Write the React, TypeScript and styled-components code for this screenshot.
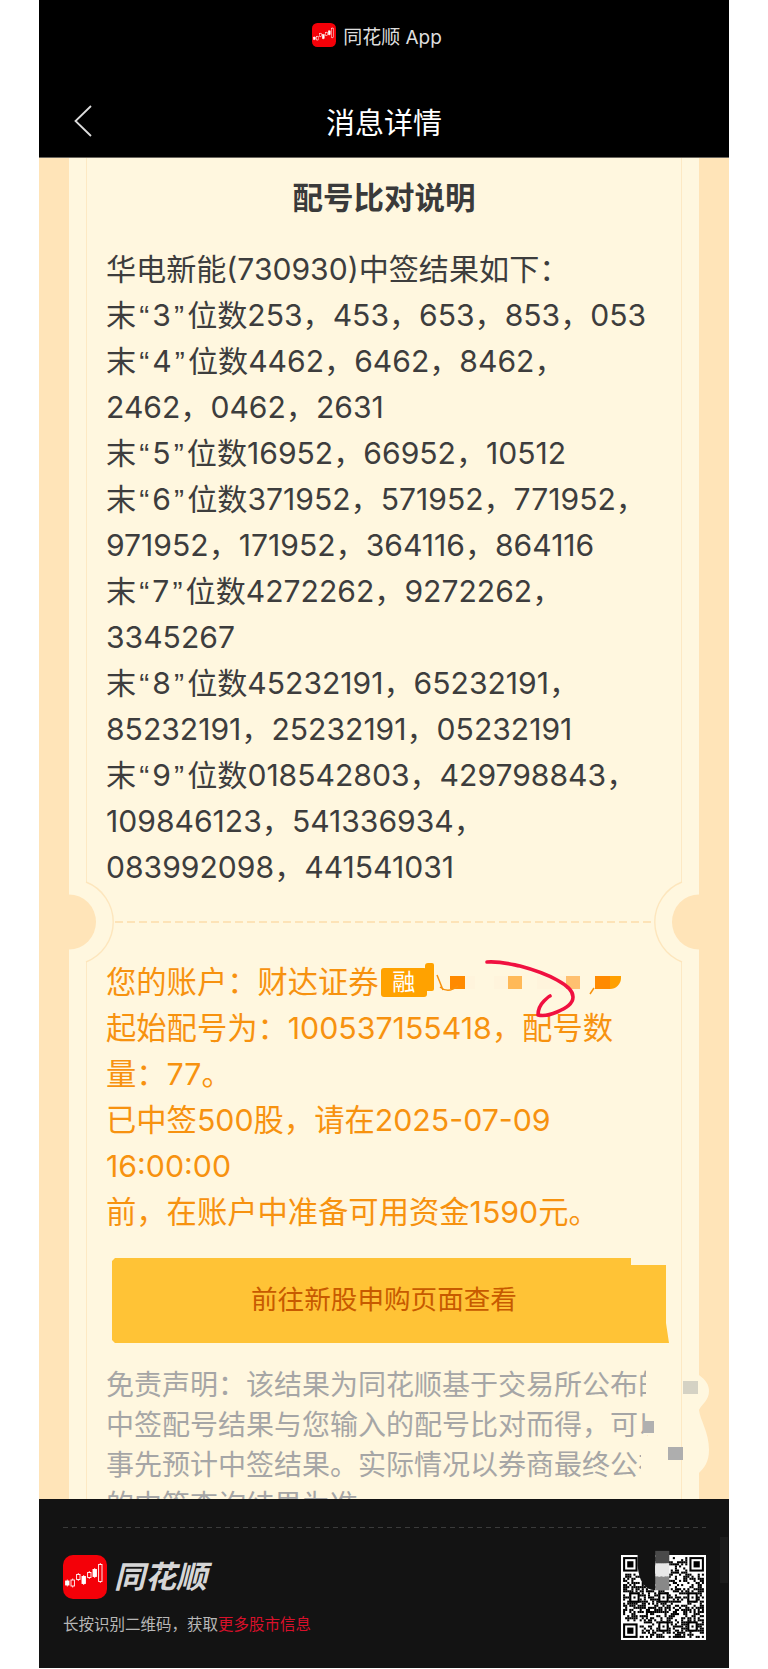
import * as React from "react"
import styled, { createGlobalStyle } from "styled-components"

const GlobalStyle = createGlobalStyle`
  html, body {
    margin: 0;
    padding: 0;
    background: #fff;
    font-family: Inter, "Noto Sans CJK SC", sans-serif;
  }
`

const resultLines = [
    '华电新能(730930)中签结果如下：',
    '末“3”位数253，453，653，853，053',
    '末“4”位数4462，6462，8462，',
    '2462，0462，2631',
    '末“5”位数16952，66952，10512',
    '末“6”位数371952，571952，771952，',
    '971952，171952，364116，864116',
    '末“7”位数4272262，9272262，',
    '3345267',
    '末“8”位数45232191，65232191，',
    '85232191，25232191，05232191',
    '末“9”位数018542803，429798843，',
    '109846123，541336934，',
    '083992098，441541031',
]

const accountLines = [
    '起始配号为：100537155418，配号数',
    '量：77。',
    '已中签500股，请在2025-07-09',
    '16:00:00',
    '前，在账户中准备可用资金1590元。',
]

const disclaimerLines = [
    { text: '免责声明：该结果为同花顺基于交易所公布的', width: 540 },
    { text: '中签配号结果与您输入的配号比对而得，可以', width: 542 },
    { text: '事先预计中签结果。实际情况以券商最终公布', width: 535 },
    { text: '的中签查询结果为准', width: 540 },
]

const maskPieces = [
    { width: 15, color: '#ff8a00' },
    { width: 10, color: '#fff4dc' },
    { width: 19, color: 'transparent' },
    { width: 14, color: '#fff4dc' },
    { width: 14, color: '#ffb958' },
    { width: 15, color: 'transparent' },
    { width: 29, color: '#fff4dc' },
    { width: 14, color: '#ffc070' },
    { width: 15, color: 'transparent' },
    { width: 15, color: '#ff8a00' },
    { width: 11, color: '#ffa000', round: true },
]

const Phone = styled.div`
  width: 690px;
  height: 1668px;
  margin-left: 39px;
  display: flex;
  flex-direction: column;
  overflow: hidden;
`

const Header = styled.header`
  height: 158px;
  flex: none;
  box-sizing: border-box;
  background: #000;
  border-bottom: 1px solid #6a665e;
`

const AppRow = styled.div`
  height: 70px;
  box-sizing: border-box;
  padding-right: 14px;
  display: flex;
  align-items: center;
  justify-content: center;
  gap: 7px;
  color: #dedede;
  font-size: 19px;
`

const NavBar = styled.div`
  display: grid;
  grid-template-columns: 1fr auto 1fr;
  align-items: center;
  height: 58px;
  margin-top: 22px;
  padding-left: 35px;
  padding-right: 35px;
  color: #fff;
  font-size: 29px;
`

const Body = styled.main`
  position: relative;
  flex: 1;
  min-height: 0;
  overflow: hidden;
  padding: 0 30px;
  background: #ffe4b8;
`

const Ticket = styled.section`
  position: relative;
  height: 100%;
  padding: 0 17px;
  background: #fff7df;
`

const Inner = styled.div`
  height: 100%;
  box-sizing: border-box;
  padding: 17px 14px 0 19px;
  border-left: 1px solid #fde9c4;
  border-right: 1px solid #fde9c4;
`

const Title = styled.h1`
  margin: 0 0 25px;
  padding-right: 5px;
  text-align: center;
  font-size: 30.5px;
  line-height: 46px;
  font-weight: 700;
  color: #3a3a3a;
`

const Line = styled.div<{ $color: string; $size: number }>`
  height: 46px;
  font-size: ${props => props.$size}px;
  line-height: 46px;
  white-space: nowrap;
  color: ${props => props.$color};
`

const Quote = styled.span`
  margin: 0 3.1px;
  font-family: "Liberation Sans", sans-serif;
  line-height: 0;
`

const Divider = styled.div`
  height: 2px;
  margin: 31px 14px 36px 9px;
  background: repeating-linear-gradient(90deg, #fde3b7 0 8px, transparent 8px 12px);
`

const AccountBlock = styled.div`
  position: relative;
`

const AccountLine = styled(Line)`
  display: flex;
  align-items: center;
`

const Badge = styled.span`
  position: relative;
  width: 46px;
  height: 29px;
  margin-left: 2px;
  flex: none;
  display: flex;
  align-items: center;
  justify-content: center;
  border-radius: 3px;
  background: #ffa200;
  color: #fff;
  font-size: 23px;
  line-height: 29px;
  &::after {
    content: "";
    position: absolute;
    left: 44px;
    top: -5px;
    width: 9px;
    height: 28px;
    border-radius: 3px 2px 2px 0;
    background: #ffa200;
  }
`

const Mask = styled.span`
  display: flex;
  height: 13px;
  margin-left: 23px;
`

const MaskPiece = styled.span<{ $width: number; $color: string; $round?: boolean }>`
  width: ${props => props.$width}px;
  background: ${props => props.$color};
  border-bottom-right-radius: ${props => props.$round ? '11px' : '0'};
`

const Scribble = styled.svg`
  position: absolute;
  left: 264px;
  top: -9px;
  width: 270px;
  height: 70px;
`

const BuyButton = styled.div`
  width: 557px;
  height: 85px;
  box-sizing: border-box;
  margin: 23px 0 22px 6px;
  padding: 0 13px 6px 0;
  display: flex;
  align-items: center;
  justify-content: center;
  background: #ffc336;
  color: #c75a00;
  font-size: 26.6px;
  clip-path: polygon(3px 0, 519px 0, 519px 7px, 554px 7px, 554px 65px, 557px 85px, 3px 85px, 0 82px, 0 3px);
`

const Disclaimer = styled.div<{ $width: number }>`
  width: ${props => props.$width}px;
  overflow: hidden;
  white-space: nowrap;
  font-size: 28px;
  line-height: 40px;
  color: #a6a6a6;
`

const Notch = styled.svg<{ $right?: boolean }>`
  position: absolute;
  top: 722px;
  width: 60px;
  height: 84px;
  ${props => props.$right ? 'right: 0; transform: scaleX(-1);' : 'left: 0;'}
`

const EdgeBlob = styled.svg`
  position: absolute;
  left: 601px;
  top: 1212px;
  width: 72px;
  height: 110px;
`

const Footer = styled.footer`
  position: relative;
  height: 169px;
  flex: none;
  box-sizing: border-box;
  padding: 28px 23px 0 24px;
  background: #131313;
  &::after {
    content: "";
    position: absolute;
    right: 1px;
    top: 38px;
    width: 8px;
    height: 46px;
    background: #1c1c1c;
  }
`

const FooterRule = styled.div`
  height: 1px;
  background: repeating-linear-gradient(90deg, #3a3a3a 0 5px, transparent 5px 9px);
`

const FooterRow = styled.div`
  display: flex;
  justify-content: space-between;
  margin-top: 27px;
`

const BrandRow = styled.div`
  display: flex;
  align-items: center;
  gap: 7px;
  height: 44px;
`

const Wordmark = styled.span`
  font-size: 31px;
  line-height: 44px;
  font-weight: 700;
  font-style: italic;
  color: #d6d6d6;
`

const Caption = styled.div`
  margin-top: 16px;
  font-size: 15.5px;
  line-height: 20px;
  color: #b8b8b8;
  white-space: nowrap;
`

const Highlight = styled.span`
  color: #d8102a;
`

const QrCode = styled.svg`
  width: 85px;
  height: 85px;
  flex: none;
  overflow: visible;
  filter: blur(0.35px);
`

// candles of the logo, in its 44 x 44 box
const candles = [
    { x: 4.3, y: 28, h: 4, solid: true },
    { x: 9.7, y: 28, h: 6, solid: false },
    { x: 15.3, y: 22, h: 5, solid: false },
    { x: 20.7, y: 25, h: 7, solid: true },
    { x: 26.3, y: 20, h: 5, solid: false },
    { x: 31.7, y: 18, h: 7, solid: true },
    { x: 37.3, y: 18, h: 17, solid: false },
]

const LogoMark = ({ size }: { size: number }) => (
    <svg width={size} height={size} viewBox="0 0 44 44">
        <rect width="44" height="44" rx="10" fill="#f40008" />
        {candles.map(c => (
            <g key={c.x}>
                <line x1={c.x} x2={c.x} y1={c.y - c.h / 2 - 1.5} y2={c.y + c.h / 2 + 1.5} stroke="#fff" strokeWidth="0.8" />
                <rect
                    x={c.x - 1.7}
                    y={c.y - c.h / 2}
                    width="3.4"
                    height={c.h}
                    fill={c.solid ? '#fff' : '#f40008'}
                    stroke="#fff"
                    strokeWidth="0.9"
                />
            </g>
        ))}
    </svg>
)

const NotchShape = ({ right }: { right?: boolean }) => (
    <Notch $right={right} viewBox="0 0 60 84">
        <rect x="15" y="3" width="4" height="78" fill="#fff7df" />
        <path d="M0 14.5 A27 27.5 0 0 1 0 69.5 Z" fill="#ffe4b8" />
        <path d="M17 2 A43 43 0 0 1 17 82" fill="none" stroke="#fde6bd" strokeWidth="1.4" />
    </Notch>
)

const withQuotes = (line: string) =>
    line.split(/([“”])/).map((part, i) => (i % 2 === 1 ? <Quote key={i}>{part}</Quote> : part))

const QR_SIZE = 41

const qrModules = () => {
    let seed = 73921
    const cells: { x: number; y: number }[] = []
    const inFinder = (x: number, y: number) =>
        (x < 9 && y < 9) || (x > QR_SIZE - 10 && y < 9) || (x < 9 && y > QR_SIZE - 10)
    for (let y = 1; y < QR_SIZE - 1; y++) {
        for (let x = 1; x < QR_SIZE - 1; x++) {
            seed = (seed * 1103515245 + 12345) & 0x7fffffff
            if (!inFinder(x, y) && (seed >> 16) % 100 < 50) cells.push({ x, y })
        }
    }
    return cells
}

const QrFinder = ({ x, y, size }: { x: number; y: number; size: number }) => (
    <g>
        <rect x={x} y={y} width={size} height={size} fill="#000" />
        <rect x={x + 1} y={y + 1} width={size - 2} height={size - 2} fill="#fff" />
        <rect x={x + 2} y={y + 2} width={size - 4} height={size - 4} fill="#000" />
    </g>
)

const Qr = () => {
    const cells = React.useMemo(qrModules, [])
    return (
        <QrCode viewBox={`0 0 ${QR_SIZE} ${QR_SIZE}`}>
            <rect width={QR_SIZE} height={QR_SIZE} fill="#fff" />
            {cells.map(c => <rect key={`${c.x}-${c.y}`} x={c.x} y={c.y} width="1" height="1" fill="#000" />)}
            <QrFinder x={1} y={1} size={7} />
            <QrFinder x={33} y={1} size={7} />
            <QrFinder x={1} y={33} size={7} />
            {[[6, 20], [20, 20], [34, 20], [20, 34], [34, 34]].map(([x, y]) => (
                <g key={`${x}-${y}`}>
                    <rect x={x - 2} y={y - 2} width="5" height="5" fill="#000" />
                    <rect x={x - 1} y={y - 1} width="3" height="3" fill="#fff" />
                    <rect x={x} y={y} width="1" height="1" fill="#000" />
                </g>
            ))}
            <path d="M8 0 L8 5 Q9 17 16.5 17 L16.5 0 Z" fill="#131313" />
            <rect x="16.5" y="-2" width="6.8" height="6" fill="#4a4a4a" />
            <rect x="16.5" y="4" width="6.8" height="6.5" fill="#e8e8e8" />
            <rect x="16.5" y="10.5" width="6.8" height="6.5" fill="#888" />
        </QrCode>
    )
}

export default function App() {
    return (
        <>
            <GlobalStyle />
            <Phone>
                <Header>
                    <AppRow>
                        <LogoMark size={24} />
                        <span>同花顺 App</span>
                    </AppRow>
                    <NavBar>
                        <svg width="18" height="32" viewBox="0 0 18 32">
                            <path d="M17 1 L1.5 16 L17 31" fill="none" stroke="#ddd" strokeWidth="1.8" />
                        </svg>
                        <span>消息详情</span>
                    </NavBar>
                </Header>
                <Body>
                    <Ticket>
                        <Inner>
                            <Title>配号比对说明</Title>
                            {resultLines.map(line => <Line key={line} $color="#3d3d3d" $size={30.1}>{withQuotes(line)}</Line>)}
                            <Divider />
                            <AccountBlock>
                                <AccountLine $color="#f7920f" $size={30.3}>
                                    您的账户：财达证券
                                    <Badge>融</Badge>
                                    <Mask>
                                        {maskPieces.map((piece, i) => (
                                            <MaskPiece key={i} $width={piece.width} $color={piece.color} $round={piece.round} />
                                        ))}
                                    </Mask>
                                </AccountLine>
                                {accountLines.map(line => <Line key={line} $color="#f7920f" $size={30.3}>{line}</Line>)}
                                <Scribble viewBox="0 0 270 70">
                                    <path d="M67 25 L73 40 M70 37 Q78 44 88 36 M220 44 L224 38" fill="none" stroke="#f7920f" strokeWidth="1.5" />
                                    <path
                                        d="M117 12 C130 11 140 14 150 16 C165 20 178 25 187 30 C196 35 203 40 203 47 C203 54 196 58 187 62 C180 65 172 66 168 65 C168 60 170 55 174 51 C176 49 178 47 180 46"
                                        fill="none"
                                        stroke="#f01040"
                                        strokeWidth="3.6"
                                        strokeLinecap="round"
                                        strokeLinejoin="round"
                                    />
                                </Scribble>
                            </AccountBlock>
                            <BuyButton>前往新股申购页面查看</BuyButton>
                            {disclaimerLines.map(line => (
                                <Disclaimer key={line.text} $width={line.width}>{line.text}</Disclaimer>
                            ))}
                        </Inner>
                        <NotchShape />
                        <NotchShape right />
                    </Ticket>
                    <EdgeBlob viewBox="0 0 72 110">
                        <path
                            d="M42 5 L59 5 C66 10 69 15 69 21 C69 30 62 34 59 40 C60 50 69 62 69 80 C69 92 64 98 59 103 L42 103 Z"
                            fill="#fff7df"
                        />
                        <rect x="43" y="11" width="15" height="13" fill="#d5d2c4" />
                        <rect x="3" y="51" width="11" height="12" fill="#b0b0b0" />
                        <rect x="28" y="77" width="15" height="13" fill="#aeaeae" />
                    </EdgeBlob>
                </Body>
                <Footer>
                    <FooterRule />
                    <FooterRow>
                        <div>
                            <BrandRow>
                                <LogoMark size={44} />
                                <Wordmark>同花顺</Wordmark>
                            </BrandRow>
                            <Caption>长按识别二维码，获取<Highlight>更多股市信息</Highlight></Caption>
                        </div>
                        <Qr />
                    </FooterRow>
                </Footer>
            </Phone>
        </>
    )
}
